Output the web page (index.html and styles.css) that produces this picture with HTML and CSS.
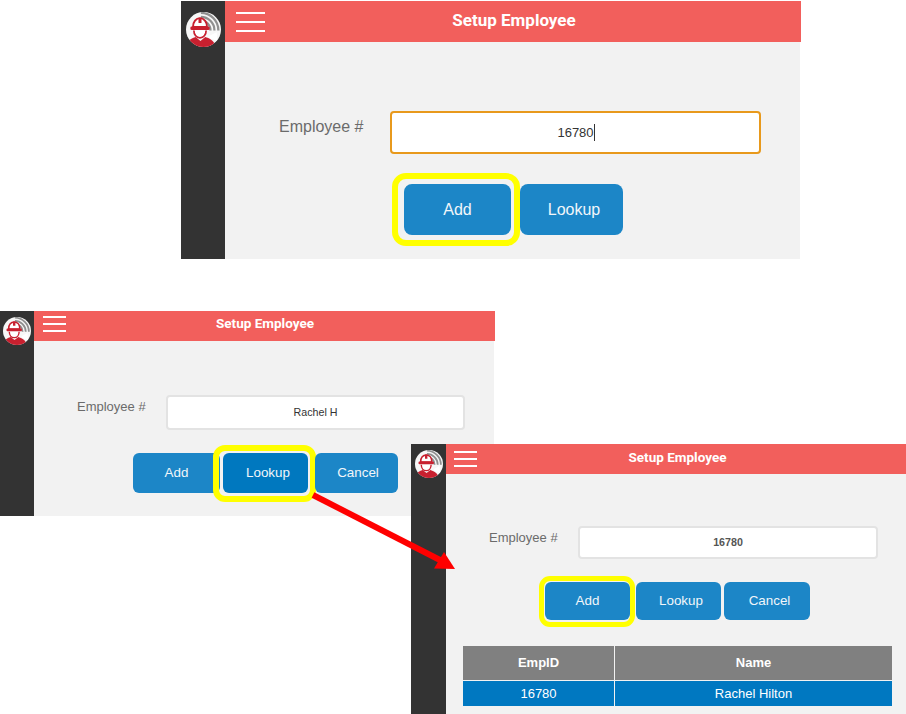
FILE: index.html
```html
<!DOCTYPE html>
<html lang="en">

<head>
    <meta charset="UTF-8">
    <title>Setup Employee</title>
    <link rel="stylesheet" href="styles.css">
</head>

<body>
    <svg class="defs" width="0" height="0">
        <clipPath id="logoClip"><circle cx="20" cy="20" r="20" /></clipPath>
        <symbol id="logo" viewBox="0 0 40 40">
            <circle cx="20" cy="20" r="20" fill="#f7f7f7" />
            <g clip-path="url(#logoClip)">
                <path d="M17 1A20 20 0 0 1 37 21M17 5.500A15.500 15.500 0 0 1 32.500 21M17 10A11 11 0 0 1 28 21" fill="none" stroke="#8f8f8f" stroke-width="2.600" />
                <path d="M27 27l8-4 1 10-9-3z" fill="#fff" />
                <g transform="translate(-3.500 0)">
                    <path d="M3 38C5 32 10 30 14.500 28.500L20 33l5.500-4.500C30 30 35 32 37 38v4H3z" fill="#c8202f" />
                    <path d="M12.500 21c0 5 3 8.500 7 8.500s7-3.500 7-8.500" fill="#fff" stroke="#c8202f" stroke-width="2" />
                    <path d="M11.500 17c0-6 3.500-10 8-10s8 4 8 10z" fill="#fff" stroke="#c8202f" stroke-width="2.200" />
                    <path d="M17.800 6.500h3.400v6h-3.400z" fill="#c8202f" />
                    <rect x="8.500" y="16.500" width="22" height="4" rx="1.500" fill="#c8202f" />
                </g>
            </g>
        </symbol>
    </svg>

    <section class="window win-a">
        <div class="rail"><svg class="logo"><use href="#logo" /></svg></div>
        <div class="main">
            <header class="bar">
                <div class="burger"><span></span><span></span><span></span></div>
                <h1 class="title">Setup Employee</h1>
            </header>
            <div class="content">
                <div class="formRow">
                    <label class="label">Employee #</label>
                    <div class="field focused">16780<span class="caret"></span></div>
                </div>
                <div class="buttons">
                    <button class="btn add">Add<span class="ring"></span></button>
                    <button class="btn lookup">Lookup</button>
                </div>
            </div>
        </div>
    </section>

    <section class="window win-b">
        <div class="rail"><svg class="logo"><use href="#logo" /></svg></div>
        <div class="main">
            <header class="bar">
                <div class="burger"><span></span><span></span><span></span></div>
                <h1 class="title">Setup Employee</h1>
            </header>
            <div class="content">
                <div class="formRow">
                    <label class="label">Employee #</label>
                    <div class="field">Rachel H</div>
                </div>
                <div class="buttons">
                    <button class="btn add">Add</button>
                    <button class="btn lookup active">Lookup<span class="ring"></span></button>
                    <button class="btn cancel">Cancel</button>
                </div>
            </div>
        </div>
    </section>

    <section class="window win-c">
        <div class="rail"><svg class="logo"><use href="#logo" /></svg></div>
        <div class="main">
            <header class="bar">
                <div class="burger"><span></span><span></span><span></span></div>
                <h1 class="title">Setup Employee</h1>
            </header>
            <div class="content">
                <div class="formRow">
                    <label class="label">Employee #</label>
                    <div class="field boldValue">16780</div>
                </div>
                <div class="buttons">
                    <button class="btn add">Add<span class="ring"></span></button>
                    <button class="btn lookup">Lookup</button>
                    <button class="btn cancel">Cancel</button>
                </div>
                <table class="results">
                    <thead>
                        <tr><th class="colId">EmpID</th><th>Name</th></tr>
                    </thead>
                    <tbody>
                        <tr><td>16780</td><td>Rachel Hilton</td></tr>
                    </tbody>
                </table>
            </div>
        </div>
    </section>

    <svg class="arrow" width="906" height="714" viewBox="0 0 906 714">
        <path d="M313 495L440 560" fill="none" stroke="#f00" stroke-width="6" />
        <path d="M455 569L434 568.500L444 552z" fill="#f00" />
    </svg>
</body>

</html>
```

FILE: styles.css
```css
html {
    margin: 0px;
    height: 100%;
    background-color: white;
}

body {
    margin: 0px;
    padding: 0px;
    width: 906px;
    height: 714px;
    position: relative;
    overflow: hidden;
    font-family: 'Liberation Sans', Arial, sans-serif;
}

.defs {
    position: absolute;
}

/* the three screenshots sit on the page like loose windows */
.window {
    position: absolute;
    display: flex;
    background-color: white;
}

.win-a {
    left: 181px;
    top: 1px;
    width: 620px;
    height: 258px;
}

.win-b {
    left: 0px;
    top: 311px;
    width: 495px;
    height: 205px;
}

.win-c {
    left: 411px;
    top: 444px;
    width: 495px;
    height: 270px;
}

.rail {
    flex: none;
    background-color: #333333;
    display: flex;
    justify-content: center;
    align-items: flex-start;
}

.win-a .rail {
    width: 44px;
    padding-top: 11px;
}

.win-b .rail {
    width: 34px;
    padding-top: 6px;
}

.win-c .rail {
    width: 35px;
    padding-top: 6px;
}

.logo {
    display: block;
    width: 28px;
    height: 28px;
}

.win-a .logo {
    width: 35px;
    height: 35px;
    margin-left: 1px;
}

.main {
    flex: 1;
    display: flex;
    flex-direction: column;
    min-width: 0;
}

.bar {
    flex: none;
    display: flex;
    align-items: center;
    background-color: #f25f5c;
    height: 30px;
    padding-left: 9px;
}

.win-a .bar {
    height: 41px;
    padding-left: 11px;
}

.burger {
    flex: none;
    width: 23px;
    display: flex;
    flex-direction: column;
    gap: 5px;
}

.burger span {
    display: block;
    height: 2px;
    background-color: white;
}

.win-a .burger {
    width: 29px;
    gap: 7px;
}

.win-b .burger {
    margin-top: -4px;
}

.win-c .burger {
    margin-left: -1px;
    margin-top: -1px;
}

.title {
    flex: 1;
    margin: 0;
    padding-right: 28px;
    text-align: center;
    color: white;
    font-family: Roboto, sans-serif;
    font-weight: 700;
    font-size: 13.5px;
}

.win-b .title {
    margin-top: -6px;
    padding-right: 31px;
}

.win-c .title {
    margin-top: -4px;
    padding-right: 28px;
}

.win-a .title {
    margin-top: -3px;
    font-size: 17px;
    padding-right: 38px;
}

.content {
    flex: 1;
    background-color: #f2f2f2;
    padding-top: 54px;
    padding-left: 43px;
    margin-right: 1px;
}

.win-a .content {
    padding-top: 69px;
    padding-left: 54px;
}

.win-c .content {
    padding-top: 52px;
    margin-right: 0;
}

.formRow {
    display: flex;
    align-items: flex-start;
}

.label {
    flex: none;
    width: 89px;
    color: #6b6b6b;
    font-size: 13px;
    line-height: 24px;
}

.win-a .label {
    width: 111px;
    font-size: 16px;
    line-height: 31px;
}

.field {
    box-sizing: border-box;
    flex: none;
    display: flex;
    justify-content: center;
    align-items: center;
    width: 299px;
    height: 35px;
    background-color: white;
    border: 2px solid #e3e3e3;
    border-radius: 4px;
    padding-bottom: 1px;
    color: #333333;
    font-size: 10.700px;
}

.win-c .field {
    width: 300px;
    height: 33px;
}

.win-a .field {
    width: 371px;
    height: 43px;
    font-size: 13px;
    padding-left: 1px;
}

.field.focused {
    border-color: #e8991c;
}

.boldValue {
    font-weight: 700;
    color: #555555;
}

.caret {
    display: inline-block;
    width: 1px;
    height: 17px;
    background-color: #333333;
}

.buttons {
    display: flex;
    margin-top: 23px;
    margin-left: 56px;
}

.win-a .buttons {
    margin-top: 30px;
    margin-left: 125px;
    gap: 9px;
}

.btn {
    position: relative;
    padding: 0 0 2px;
    outline: none;
    border-style: none;
    border-radius: 6px;
    height: 40px;
    color: #f2f6fa;
    background-color: #1c86c7;
    font-family: inherit;
    font-size: 13.400px;
}

.btn.lookup,
.btn.cancel {
    padding-left: 5px;
}

.win-b .btn.cancel {
    padding-left: 3px;
}

.win-a .btn {
    height: 51px;
    border-radius: 8px;
    font-size: 16px;
    padding-bottom: 0;
}

.win-a .add {
    width: 107px;
}

.win-a .lookup {
    width: 103px;
}

.win-b .add {
    width: 87px;
    margin-right: 3px;
}

.win-b .lookup {
    width: 85px;
    margin-right: 7px;
}

.win-b .cancel {
    width: 83px;
}

.win-c .btn {
    height: 38px;
}

.win-c .add {
    width: 85px;
    margin-right: 6px;
}

.win-c .lookup {
    width: 85px;
    margin-right: 3px;
}

.win-c .cancel {
    width: 86px;
}

.btn.active {
    background-color: #0078bf;
}

/* yellow marker drawn round the button */
.ring {
    position: absolute;
    inset: -7px -7px -7px -8px;
    border: 6px solid #ffff00;
    border-radius: 11px;
}

.win-a .ring {
    inset: -11px -9px -11px -12px;
    border-radius: 14px;
}

.win-b .ring {
    inset: -8px -8px -9px -10px;
    border-radius: 12px;
}

.win-c .ring {
    inset: -6px -5px -7px -6px;
    border-width: 5px;
    border-radius: 11px;
}

.results {
    margin-top: 26px;
    margin-left: -26px;
    width: 429px;
    table-layout: fixed;
    border-collapse: separate;
    border-spacing: 0;
    font-size: 13px;
    color: white;
}

.results .colId {
    width: 152px;
    border-right: 1px solid #f2f2f2;
}

.results th {
    box-sizing: border-box;
    height: 35px;
    padding: 0 0 2px;
    background-color: #808080;
    border-bottom: 1px solid #f2f2f2;
}

.results td {
    height: 25px;
    padding: 0;
    text-align: center;
    background-color: #0078c1;
}

.results td:first-child {
    border-right: 1px solid #f2f2f2;
}

.arrow {
    position: absolute;
    left: 0;
    top: 0;
    pointer-events: none;
}
```
